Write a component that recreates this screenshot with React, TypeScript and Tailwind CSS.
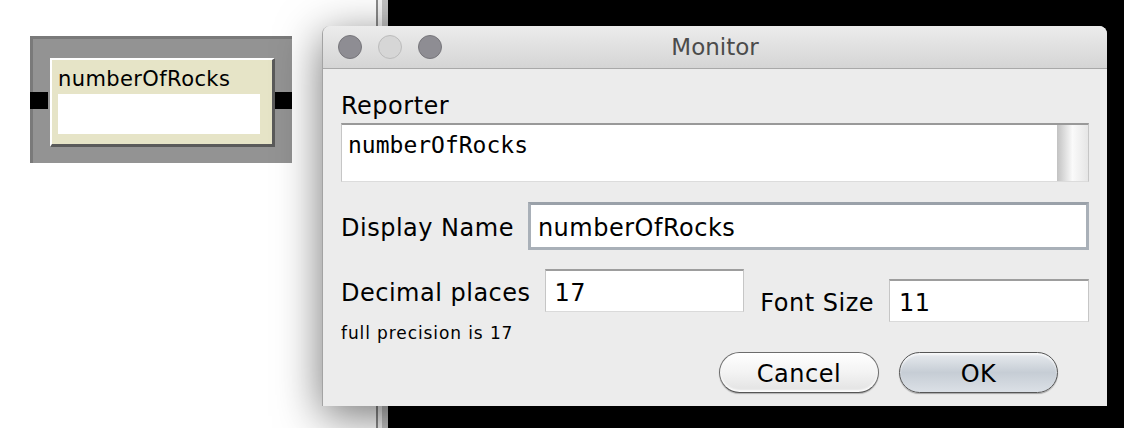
import React from "react";

const sans = "font-['DejaVu_Sans','Liberation_Sans',sans-serif]";
const mono = "font-['DejaVu_Sans_Mono','Liberation_Mono',monospace]";

function TrafficLight({ light }: { light?: boolean }) {
  return (
    <span
      className={
        light
          ? "h-6 w-6 rounded-full border border-[#bcbcbc] bg-[#d6d6d6]"
          : "h-6 w-6 rounded-full border border-[#77767b] bg-[#8e8d93]"
      }
    />
  );
}

function MonitorWidget() {
  return (
    <div className="absolute left-[30px] top-[36px] h-[127px] w-[262px] border-l-[3px] border-t-[3px] border-[#7a7a7a] bg-[#939393] pl-[17px] pt-[19px]">
      {/* connectors */}
      <div className="absolute left-[-3px] top-[53px] h-[17px] w-[18px] bg-black" />
      <div className="absolute right-0 top-[53px] h-[17px] w-[17px] bg-black" />
      <div className="relative flex h-[89px] w-[225px] flex-col border-b-[3px] border-l-2 border-r-[3px] border-t-2 border-b-[#5a5a5a] border-l-white border-r-[#5a5a5a] border-t-white bg-[#e6e4c7] pl-[6px] pr-[12px]">
        <span className={`${sans} mt-[7px] text-[21px] leading-[24px] tracking-[0.4px] text-black`}>numberOfRocks</span>
        <div className="mt-[3px] h-[40px] w-[202px] bg-white" />
      </div>
    </div>
  );
}

function Field({ value, className }: { value: string; className: string }) {
  return (
    <div
      className={`flex items-center border border-b-[#dadada] border-l-[#c6c6c6] border-r-[#c6c6c6] border-t-2 border-t-[#9d9d9d] bg-white pl-[9px] pt-[3px] ${sans} text-[24px] tracking-[0.5px] text-black ${className}`}
    >
      {value}
    </div>
  );
}

function Dialog() {
  return (
    <div className="absolute left-[322px] top-[26px] flex h-[380px] w-[785px] flex-col overflow-hidden rounded-t-[8px] border-l border-[#a3a3a3] bg-[#ececec] shadow-[0_10px_45px_rgba(0,0,0,0.55)]">
      {/* title bar */}
      <div className="relative flex h-[43px] shrink-0 items-center border-b border-[#a9a9a9] bg-gradient-to-b from-[#ececec] to-[#d5d5d5] pl-[15px]">
        <div className="flex gap-[16px]">
          <TrafficLight />
          <TrafficLight light />
          <TrafficLight />
        </div>
        <span className={`${sans} absolute inset-x-0 top-[7px] text-center text-[23px] leading-[28px] text-[#4b4b4b]`}>
          Monitor
        </span>
      </div>

      {/* body */}
      <div className={`${sans} flex flex-col px-[18px] pt-[23px] text-[24px] leading-[28px] tracking-[0.5px] text-black`}>
        <span>Reporter</span>
        <div className="mt-[3px] flex h-[59px] w-[748px] border-x border-b border-t-2 border-b-[#dcdcdc] border-x-[#c6c6c6] border-t-[#999999] bg-white">
          <span className={`${mono} flex-1 pl-[6px] pt-[7px] text-[23px] leading-[27px] tracking-normal`}>numberOfRocks</span>
          <div className="w-[31px] bg-gradient-to-r from-[#c2c2c2] via-[#fafafa] to-[#e6e6e6]" />
        </div>

        <div className="mt-[20px] flex items-center">
          <span className="mt-[4px]">Display Name</span>
          <div className="ml-[14px] flex h-[48px] flex-1 items-center border-[3px] border-[#a9b0b8] border-t-[#9aa1a9] bg-white pl-[7px] pt-[3px]">
            numberOfRocks
          </div>
        </div>

        <div className="mt-[19px] flex items-start">
          <div className="flex flex-col">
            <div className="flex items-center">
              <span className="mt-[4px]">Decimal places</span>
              <Field value="17" className="ml-[14px] h-[43px] w-[199px]" />
            </div>
            <span className="mt-[11px] text-[17px] leading-[20px] tracking-[0.9px]">full precision is 17</span>
          </div>
          <div className="ml-auto mt-[10px] flex items-center">
            <span className="mt-[4px]">Font Size</span>
            <Field value="11" className="ml-[15px] h-[43px] w-[200px]" />
          </div>
        </div>

        <div className="mt-[9px] flex justify-end gap-[20px] pr-[31px]">
          <button className="flex h-[41px] w-[160px] items-center justify-center rounded-full border border-[#6c6c6c] border-b-[#555555] bg-gradient-to-b from-[#ffffff] via-[#f3f3f3] to-[#e2e2e2] pt-[2px] text-[24px] leading-[28px] text-black shadow-[inset_0_-2px_2px_rgba(255,255,255,0.9),0_1px_1px_rgba(0,0,0,0.25)]">
            Cancel
          </button>
          <button className="flex h-[41px] w-[159px] items-center justify-center rounded-full border border-[#565656] bg-gradient-to-b from-[#e8ebef] via-[#c6cdd5] to-[#dbe0e6] pt-[2px] text-[24px] leading-[28px] text-black shadow-[inset_0_2px_2px_rgba(255,255,255,0.7),0_1px_1px_rgba(0,0,0,0.3)]">
            OK
          </button>
        </div>
      </div>
    </div>
  );
}

export default function App() {
  return (
    <div className="relative h-[428px] w-[1124px] overflow-hidden">
      {/* background: interface canvas and the view edge */}
      <div className="flex h-full w-full">
        <div className="w-[376px] bg-white" />
        <div className="w-[2px] bg-[#8a8a8a]" />
        <div className="w-[4px] bg-[#f4f4f4]" />
        <div className="w-[6px] bg-[#c3c3c3]" />
        <div className="flex-1 bg-black" />
      </div>

      <MonitorWidget />
      <Dialog />
    </div>
  );
}
